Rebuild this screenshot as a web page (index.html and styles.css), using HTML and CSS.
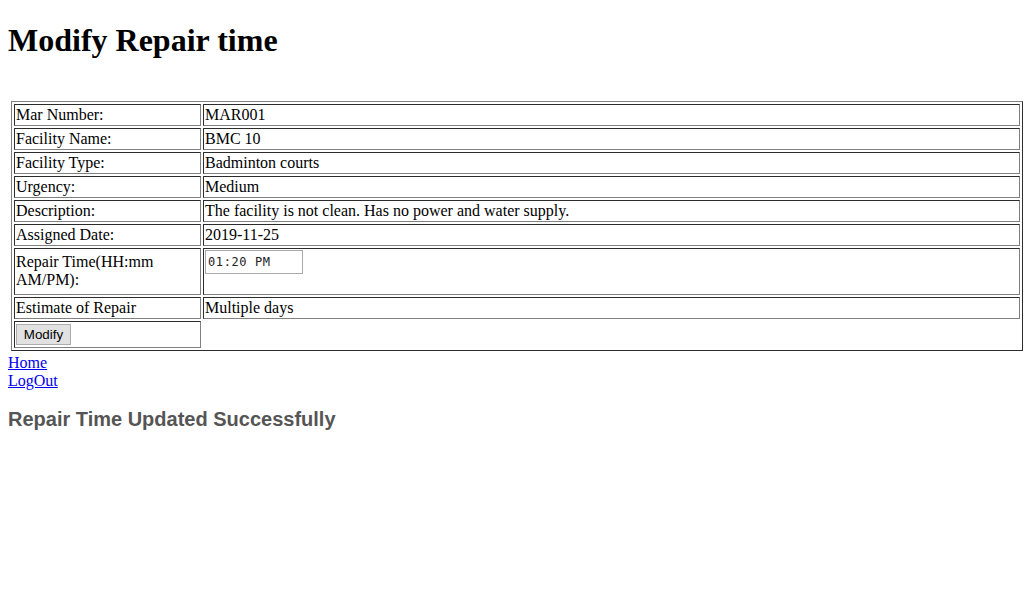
FILE: index.html
```html
<!DOCTYPE html>
<html>
<head>
<meta charset="utf-8">
<title>Modify Repair time</title>
<link rel="stylesheet" href="styles.css">
</head>
<body>
<h1 class="title">Modify Repair time</h1>
<br>
<form class="repair-form">
<table class="details">
  <tr><td class="label">Mar Number:</td><td>MAR001</td></tr>
  <tr><td class="label">Facility Name:</td><td>BMC 10</td></tr>
  <tr><td class="label">Facility Type:</td><td>Badminton courts</td></tr>
  <tr><td class="label">Urgency:</td><td>Medium</td></tr>
  <tr><td class="label">Description:</td><td>The facility is not clean. Has no power and water supply.</td></tr>
  <tr><td class="label">Assigned Date:</td><td>2019-11-25</td></tr>
  <tr><td class="label">Repair Time(HH:mm AM/PM):</td><td class="time-cell"><input class="time-input" type="text" value="01:20 PM"><div class="time-spacer"></div></td></tr>
  <tr><td class="label">Estimate of Repair</td><td>Multiple days</td></tr>
  <tr class="action-row"><td class="label button-cell"><button class="modify-btn" type="button">Modify</button></td></tr>
</table>
</form>
<a class="nav-link" href="#">Home</a><br>
<a class="nav-link" href="#">LogOut</a>
<h3 class="status">Repair Time Updated Successfully</h3>
</body>
</html>
```

FILE: styles.css
```css
body {
  margin: 8px;
  font-family: "Liberation Serif", "Times New Roman", serif;
  font-size: 16px;
  color: #000;
  background: #fff;
}

.title {
  font-size: 32px;
  font-weight: bold;
  margin: 13.5px 0 21.44px;
}

.repair-form {
  margin: 0;
}

.details {
  margin: 3px;
  width: calc(100% - 6px);
  border: 1px outset grey;
  border-spacing: 2px;
  border-collapse: separate;
}

.details td {
  border: 1px inset grey;
  padding: 1px;
  vertical-align: middle;
}

.details td.label {
  width: 183px;
}

.details td.button-cell {
  padding: 2px 1px 2px;
}

.time-input {
  display: block;
  box-sizing: border-box;
  width: 98px;
  height: 24px;
  margin: 0;
  padding: 0 0 0 2px;
  border: 1px solid #a9a9a9;
  background: #fff;
  font-family: "DejaVu Sans Mono", "Liberation Mono", monospace;
  font-size: 12px;
  letter-spacing: 0.6px;
  color: #222;
  outline: none;
}

.time-spacer {
  height: 19px;
}

.modify-btn {
  display: block;
  box-sizing: border-box;
  width: 55px;
  height: 21px;
  margin: 0;
  padding: 0 6px;
  border: 1px solid #adadad;
  background: #e1e1e1;
  font-family: "Liberation Sans", Arial, sans-serif;
  font-size: 13.33px;
  color: #000;
}

.nav-link {
  color: #0000ee;
  text-decoration: underline;
}

.status {
  font-family: "Liberation Sans", Arial, sans-serif;
  font-size: 20px;
  font-weight: bold;
  color: #555;
  margin: 18px 0;
}
```
